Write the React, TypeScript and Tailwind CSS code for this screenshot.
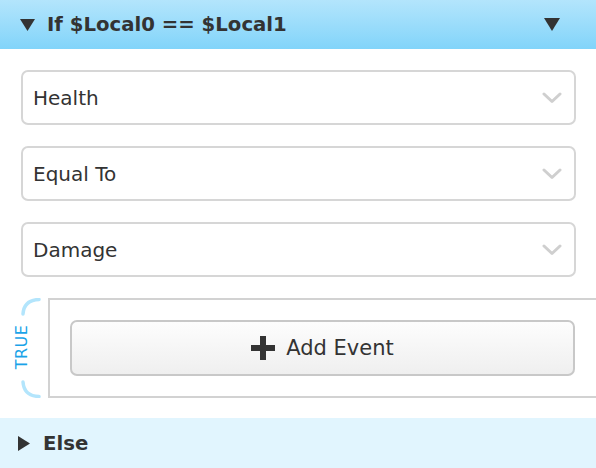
import React from 'react';

const font = { fontFamily: '"DejaVu Sans", Verdana, sans-serif' };

const Chevron = () => (
  <svg width="20" height="12" viewBox="0 0 20 12" className="shrink-0">
    <polyline points="2,2 10,9.5 18,2" fill="none" stroke="#cfcfcf" strokeWidth="3" strokeLinecap="round" strokeLinejoin="round" />
  </svg>
);

const SelectBox: React.FC<{ label: string }> = ({ label }) => (
  <div className="h-[55px] mx-[21px] mr-[20px] flex items-center justify-between rounded-[7px] border-2 border-[#d6d6d6] bg-white pl-[10px] pr-[12px]">
    <span className="text-[20px] text-[#333] mt-[1px]">{label}</span>
    <Chevron />
  </div>
);

export default function App() {
  return (
    <div className="w-[596px] h-[468px] bg-white overflow-hidden" style={font}>
      {/* header */}
      <div className="h-[49px] flex items-center bg-gradient-to-b from-[#b3e5fc] to-[#81d4fa] pl-[20px] pr-[36px]">
        <svg width="15" height="12" viewBox="0 0 15 12" className="shrink-0">
          <polygon points="0,0 15,0 7.5,12" fill="#333" />
        </svg>
        <span className="ml-[12px] text-[19.7px] font-bold text-[#333] flex-1 mt-[1px]">If $Local0 == $Local1</span>
        <svg width="16" height="13" viewBox="0 0 16 13" className="shrink-0">
          <polygon points="0,0 16,0 8,13" fill="#333" />
        </svg>
      </div>

      <div className="pt-[21px] flex flex-col gap-[21px]">
        <SelectBox label="Health" />
        <SelectBox label="Equal To" />
        <SelectBox label="Damage" />
      </div>

      {/* TRUE branch */}
      <div className="mt-[21px] h-[100px] flex pl-[16px]">
        <div className="relative w-[32px] h-full shrink-0">
          <svg width="32" height="100" viewBox="0 0 32 100" className="absolute inset-0">
            <path d="M23,1.5 Q8,2 7,16" fill="none" stroke="#b3e5fc" strokeWidth="3.5" strokeLinecap="round" />
            <path d="M23,98.5 Q8,98 7,84" fill="none" stroke="#b3e5fc" strokeWidth="3.5" strokeLinecap="round" />
          </svg>
          <span className="absolute left-[-17px] top-[41px] w-[46px] text-center -rotate-90 text-[16px] leading-[16px] tracking-[0.5px] text-[#1aa3e8]">
            TRUE
          </span>
        </div>
        <div className="flex-1 h-full border-2 border-r-0 border-[#d2d2d2] pt-[20px] pl-[20px] pr-[21px]">
          <button className="w-full h-[56px] flex items-center justify-center rounded-[7px] border-2 border-[#c8c8c8] bg-gradient-to-b from-[#fdfdfd] to-[#efefef] text-[#333]">
            <svg width="24" height="24" viewBox="0 0 24 24" className="shrink-0">
              <rect x="9" y="0" width="6" height="24" fill="#333" />
              <rect x="0" y="9" width="24" height="6" fill="#333" />
            </svg>
            <span className="ml-[11px] text-[21px] mt-[2px]">Add Event</span>
          </button>
        </div>
      </div>

      {/* else */}
      <div className="mt-[20px] h-[50px] flex items-center bg-[#e1f5fe] pl-[18px]">
        <svg width="12" height="15" viewBox="0 0 12 15" className="shrink-0">
          <polygon points="0,0 12,7.5 0,15" fill="#333" />
        </svg>
        <span className="ml-[13px] text-[19.7px] font-bold text-[#333] mt-[1px]">Else</span>
      </div>
    </div>
  );
}
